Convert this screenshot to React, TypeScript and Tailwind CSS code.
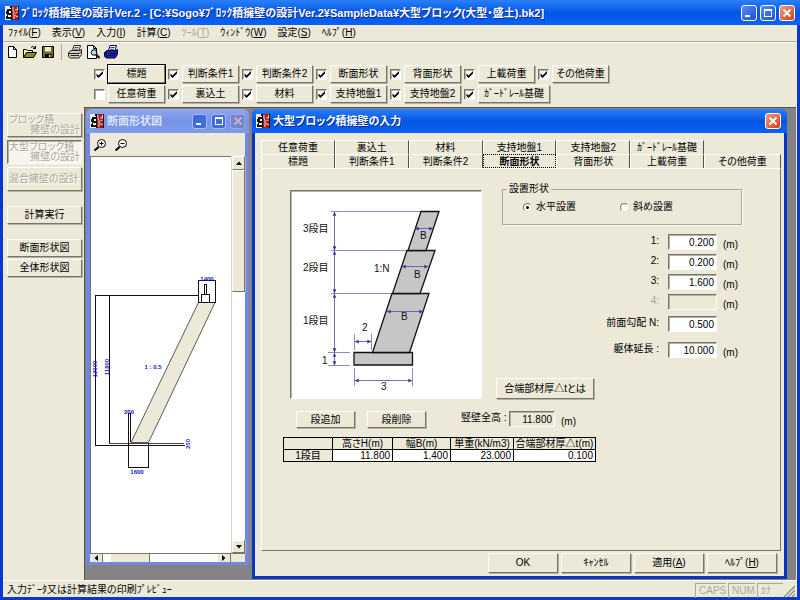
import { useState } from 'react';
import type { ReactNode } from 'react';
import clsx from 'clsx';

const TOP_CHECKS = [
  { label: '標題', on: true },
  { label: '判断条件1', on: true },
  { label: '判断条件2', on: true },
  { label: '断面形状', on: true },
  { label: '背面形状', on: true },
  { label: '上載荷重', on: true },
  { label: 'その他荷重', on: true },
];

const BOTTOM_CHECKS = [
  { label: '任意荷重', on: false },
  { label: '裏込土', on: true },
  { label: '材料', on: true },
  { label: '支持地盤1', on: true },
  { label: '支持地盤2', on: true },
  { label: 'ｶﾞｰﾄﾞﾚｰﾙ基礎', on: true },
];

const MENUS = [
  { label: 'ﾌｧｲﾙ', hot: 'F' },
  { label: '表示', hot: 'V' },
  { label: '入力', hot: 'I' },
  { label: '計算', hot: 'C' },
  { label: 'ﾂｰﾙ', hot: 'T', disabled: true },
  { label: 'ｳｨﾝﾄﾞｳ', hot: 'W' },
  { label: '設定', hot: 'S' },
  { label: 'ﾍﾙﾌﾟ', hot: 'H' },
];

const BACK_TABS = ['任意荷重', '裏込土', '材料', '支持地盤1', '支持地盤2', 'ｶﾞｰﾄﾞﾚｰﾙ基礎'];
const FRONT_TABS = ['標題', '判断条件1', '判断条件2', '断面形状', '背面形状', '上載荷重', 'その他荷重'];

const RAISED = 'border border-t-white border-l-white border-r-[#77756a] border-b-[#77756a] shadow-[1px_1px_0_#b5b2a2] bg-[#ece9d8]';
const SUNKEN = 'border border-t-[#77756a] border-l-[#77756a] border-r-white border-b-white shadow-[inset_1px_1px_0_#b5b2a2]';

function AppIcon() {
  return (
    <svg viewBox="0 0 14 14" className="w-3.5 h-3.5 shrink-0">
      <rect width="7" height="14" fill="#f4f0ea" />
      <rect x="7" width="7" height="14" fill="#a81c18" />
      <path d="M2 3h4v2H4v2h2v2H3v2h3v2H1v-3h1V8H1V5h1zM5 0h2v14H6V2H5z" fill="#111" />
      <path d="M8 1v4l1 1v7M10 4h2.500M10.500 7l2-1M10 9.500l3 1.500M12.500 1v3" fill="none" stroke="#f6e6dc" />
      <path d="M13 0h1v14h-1z" fill="#301010" />
    </svg>
  );
}

function CaptionButton({ kind, inactive }: { kind: 'min' | 'max' | 'close'; inactive?: boolean }) {
  const names = { min: '最小化', max: '最大化', close: '閉じる' };
  const size = inactive ? 'w-[15px] h-[15px]' : 'w-4 h-4';
  return (
    <button
      aria-label={names[kind]}
      className={clsx(
        'rounded-[3px] border flex items-center justify-center',
        size,
        kind === 'close' && !inactive && 'border-white bg-linear-to-br from-[#f09a80] to-[#cf3a12]',
        kind === 'close' && inactive && 'border-[#98a6e4] bg-[#7b82c8]',
        kind !== 'close' && !inactive && 'border-white bg-linear-to-br from-[#5a8cf4] to-[#1c4fd8]',
        kind !== 'close' && inactive && 'border-[#a9bdf4] bg-[#3f6be0]',
      )}
    >
      <svg viewBox="0 0 12 12" className="w-3 h-3" fill="none" stroke={kind === 'close' && inactive ? '#b9b2d8' : '#fff'}>
        {kind === 'min' && <path d="M2 9h5" strokeWidth="2" />}
        {kind === 'max' && <path d="M2 2.500h8M2.500 2v8M9.500 2v8M2 9.500h8M2 3.500h8" />}
        {kind === 'close' && <path d="M2.500 2.500l7 7M9.500 2.500l-7 7" strokeWidth="1.800" />}
      </svg>
    </button>
  );
}

function PushButton({ children, className }: { children: ReactNode; className?: string }) {
  return (
    <button className={clsx(RAISED, 'flex items-center justify-center whitespace-nowrap', className)}>
      {children}
    </button>
  );
}

function CheckItem({ label, on, wide, focused }: { label: string; on: boolean; wide?: boolean; focused?: boolean }) {
  const [checked, setChecked] = useState(on);
  return (
    <div className="flex items-center gap-[3px] w-[74px]">
      <span className="relative w-[11px] h-[11px] shrink-0">
        <input
          type="checkbox"
          aria-label={label}
          checked={checked}
          onChange={() => setChecked(!checked)}
          className={clsx('peer block appearance-none w-[11px] h-[11px] bg-white', SUNKEN)}
        />
        <svg viewBox="0 0 11 11" className="absolute inset-0 hidden peer-checked:block pointer-events-none">
          <path d="M2.500 4.500v2.500L4.500 9l4.500-4.500V2L4.500 6.500z" fill="#000" />
        </svg>
      </span>
      <PushButton
        className={clsx('h-[18px] shrink-0', wide ? 'w-[72px]' : 'w-[57px]', focused && 'outline outline-black')}
      >
        {label}
      </PushButton>
    </div>
  );
}

function ToolButton({ name, children }: { name: string; children: ReactNode }) {
  return (
    <button aria-label={name} className="w-[18px] h-4 flex items-center justify-center">
      <svg viewBox="0 0 14 14" className="w-3.5 h-3.5">{children}</svg>
    </button>
  );
}

function Printer({ body, light }: { body: string; light: string }) {
  return (
    <>
      <path d="M4.500 5.500L6 .500h6.500l-1.500 5z" fill="#fff" stroke={body} />
      <path d="M6.500 2.500h4M6 4.200h4" stroke={body} strokeWidth="0.800" />
      <path d="M.500 7.500l2.500-2h8.500l2-1v5l-2.500 3.500H2.500l-2-1.500z" fill={light} stroke={body} />
      <path d="M1 8.500h10l2-2M2.500 10.500h8.500" fill="none" stroke={body} />
    </>
  );
}

function Toolbar() {
  return (
    <div className="flex items-center h-5">
      <ToolButton name="新規">
        <path d="M3.500 1.500h5l3 3v8h-8z" fill="#fff" stroke="#000" />
        <path d="M8.500 1.500v3h3" fill="none" stroke="#000" />
      </ToolButton>
      <ToolButton name="開く">
        <path d="M.500 12.500v-8h3l1 1h5v2" fill="#f8f4a0" stroke="#000" />
        <path d="M.500 12.500l3-5h10l-3 5z" fill="#8c8a20" stroke="#000" />
        <path d="M8 2.500c1.500-1.500 3-1 4 .500M12.500 1v2.500H10" fill="none" stroke="#000" />
      </ToolButton>
      <ToolButton name="保存">
        <path d="M1.500 1.500h11v11h-11z" fill="#6f6d18" stroke="#000" />
        <path d="M4 2h6v4.500H4z" fill="#ece9d8" />
        <path d="M4 9h6.500v3.500H4z" fill="#000" />
        <path d="M8 10h1.500v2H8z" fill="#fff" />
      </ToolButton>
      <span className="w-px h-4 bg-[#aca899] mx-1" />
      <ToolButton name="印刷"><Printer body="#222" light="#d4d0c8" /></ToolButton>
      <ToolButton name="印刷プレビュー">
        <path d="M1.500 .500h6l3 3v10h-9z" fill="#fff" stroke="#000" />
        <path d="M7.500 .500v3h3" fill="none" stroke="#000" />
        <circle cx="8" cy="7.500" r="2.800" fill="#b8dfe0" stroke="#000" />
        <path d="M10 9.500l3.500 3.500" stroke="#000" strokeWidth="2" />
      </ToolButton>
      <ToolButton name="一括印刷"><Printer body="#00005c" light="#1a2496" /></ToolButton>
    </div>
  );
}

function ModeButton({ lines, pressed }: { lines: string[]; pressed?: boolean }) {
  return (
    <button
      disabled
      className={clsx(
        'w-full h-6 px-px flex flex-col justify-center leading-[10px] text-[#aca899] whitespace-nowrap [text-shadow:1px_1px_0_#fff]',
        pressed ? clsx(SUNKEN, 'bg-[#f6f4ec]') : RAISED,
      )}
    >
      {lines.map((line, i) => (
        <span key={line} className={i === 0 ? 'self-start' : 'self-end'}>{line}</span>
      ))}
    </button>
  );
}

function Sidebar() {
  return (
    <nav className="w-[81px] shrink-0 pl-1 pr-0.5 pt-1.5 flex flex-col">
      <div className="flex flex-col gap-[3px]">
        <ModeButton lines={['ブロック積', '擁壁の設計']} />
        <ModeButton lines={['大型ブロック積', '擁壁の設計']} pressed />
        <ModeButton lines={['混合擁壁の設計']} />
      </div>
      <PushButton className="mt-[15px] h-[18px]">計算実行</PushButton>
      <PushButton className="mt-[15px] h-[18px]">断面形状図</PushButton>
      <PushButton className="mt-0.5 h-[18px]">全体形状図</PushButton>
    </nav>
  );
}

function SectionDrawing() {
  return (
    <svg viewBox="91 158 140 396" preserveAspectRatio="xMidYMin meet" className="w-[140px] h-[396px]" role="img" aria-label="断面形状図">
      <path d="M131 443.500h17.500L215 303.500h-16.500z" fill="#ece9d8" stroke="#333" strokeWidth="0.800" />
      <g fill="none" stroke="#111" shapeRendering="crispEdges">
        <path d="M198.500 281.500h17v22h-17z" />
        <path d="M201.500 303v-7.500h8v7.500M204.500 296v-11h2v11" />
        <path d="M198 296.500H96M95.500 296v150.500h89M109.500 296v148" />
        <path d="M109 444.500h75" stroke="#444" />
        <path d="M128.500 414v54.500h20v-25" />
        <path d="M130.500 414v29M128 414.500h3" />
      </g>
      <g fill="#1414c8" fontSize="6" fontWeight="bold" textAnchor="middle">
        <text x="207" y="282">1400</text>
        <text x="129" y="415">200</text>
        <text x="137" y="475">1600</text>
        <text x="153" y="370">1 : 0.5</text>
        <text transform="translate(97 370) rotate(-90)">12000</text>
        <text transform="translate(109 368) rotate(-90)">11800</text>
        <text transform="translate(190 445) rotate(-90)">200</text>
      </g>
    </svg>
  );
}

function Arrow({ d }: { d: string }) {
  return (
    <svg viewBox="0 0 8 8" className="w-2 h-2"><path d={d} fill="#000" /></svg>
  );
}

function SectionWindow() {
  return (
    <section className="w-[163px] shrink-0 mb-[14px] flex flex-col rounded-t-md bg-[#7288e0] px-1 pb-[3px]">
      <header className="h-6 shrink-0 -mx-1 px-1 rounded-t-md flex items-center bg-linear-to-b from-[#90a8ec] via-[#7593e6] to-[#7f9cea]">
        <AppIcon />
        <h2 className="ml-[3px] flex-1 text-[11px] text-[#dce5fb] font-bold">断面形状図</h2>
        <div className="flex gap-1">
          <CaptionButton kind="min" inactive />
          <CaptionButton kind="max" inactive />
          <CaptionButton kind="close" inactive />
        </div>
      </header>
      <div className="h-[23px] shrink-0 bg-[#ece9d8] flex items-center gap-[7px] px-[3px]">
        {['M3.500 4.500h4M5.500 2.500v4', 'M3.500 4.500h4'].map((sign, i) => (
          <button key={sign} aria-label={i === 0 ? '拡大' : '縮小'}>
            <svg viewBox="-3 0 14 12" className="w-3.5 h-3">
              <path d="M2.500 8L-1.500 11.500" stroke="#000" strokeWidth="2" />
              <circle cx="5.500" cy="4.500" r="4" fill="#fff" stroke="#000" />
              <path d={sign} stroke="#000" />
            </svg>
          </button>
        ))}
      </div>
      <div className="flex-1 flex bg-white">
        <div className="flex-1 border-t border-l border-[#77756a] overflow-hidden">
          <SectionDrawing />
        </div>
        <div className="w-[14px] flex flex-col border-l border-[#d8d5c6]">
          <button aria-label="上へ" className={clsx(RAISED, 'h-[14px] flex items-center justify-center')}><Arrow d="M1 6h6L4 2.500z" /></button>
          <div className={clsx(RAISED, 'h-[122px]')} />
          <div className="flex-1 bg-white" />
          <button aria-label="下へ" className={clsx(RAISED, 'h-[13px] flex items-center justify-center')}><Arrow d="M1 2h6L4 5.500z" /></button>
        </div>
      </div>
      <div className="h-[9px] shrink-0 flex bg-white border-t border-[#77756a]">
        <button aria-label="左へ" className="w-[13px] bg-[#ece9d8] flex items-center justify-center border-r border-[#77756a]"><Arrow d="M6 1v6L2.500 4z" /></button>
        <div className="ml-2 w-[39px] bg-[#ece9d8] border-r border-[#77756a]" />
        <div className="flex-1" />
        <button aria-label="右へ" className="w-[13px] bg-[#ece9d8] flex items-center justify-center border-r border-[#77756a]"><Arrow d="M2 1v6l3.500-3z" /></button>
        <div className="w-[14px] bg-[#ece9d8]" />
      </div>
    </section>
  );
}

function ShapeFigure() {
  return (
    <svg viewBox="291 191 190 207" className="block w-full" role="img" aria-label="寸法図">
      <defs>
        <marker id="tip" viewBox="0 0 6 6" refX="5" refY="3" markerWidth="5" markerHeight="5" orient="auto-start-reverse">
          <path d="M0 .500L5.500 3 0 5.500z" fill="#3c3c90" />
        </marker>
      </defs>
      <g stroke="#8a8ac4" shapeRendering="crispEdges">
        <path d="M331 211.500h90M331 250.500h77M331 293.500h60M328 352.500h22M328 365.500h22" />
        <path d="M354.500 334v16M371.500 334v16M354.500 368v18M412.500 368v18" />
      </g>
      <g fill="#c6c6c6" stroke="#111" strokeWidth="1.300">
        <path d="M354 352.500h58.500v12.500H354z" />
        <path d="M372.500 352.500h37L429 293.500h-37z" />
        <path d="M392.500 293.500h27.500L435 250.500h-28z" />
        <path d="M408 250.500h18L439 211.500h-18z" />
      </g>
      <g stroke="#6060a8" strokeWidth="0.900" markerStart="url(#tip)" markerEnd="url(#tip)">
        <path d="M334.500 212v38" />
        <path d="M334.500 251v42" />
        <path d="M334.500 294v58" />
        <path d="M334.500 353v12" />
        <path d="M355 341.500h16" />
        <path d="M355 380.500h57" />
        <path d="M387 311.500h36" />
        <path d="M402 266.500h26" />
        <path d="M415 228.500h18" />
      </g>
      <g fontSize="10" fill="#111">
        <text x="303" y="232">3段目</text>
        <text x="303" y="271">2段目</text>
        <text x="303" y="324">1段目</text>
        <text x="374" y="272">1:N</text>
        <text x="420" y="239">B</text>
        <text x="414" y="278">B</text>
        <text x="401" y="320">B</text>
        <text x="362" y="331">2</text>
        <text x="322" y="364">1</text>
        <text x="381" y="390">3</text>
      </g>
    </svg>
  );
}

function Field({ id, label, value, unit, disabled }: { id: string; label: string; value: string; unit?: boolean; disabled?: boolean }) {
  return (
    <div className="flex justify-end h-4">
      <label htmlFor={id} className={clsx('mr-[9px]', disabled && 'text-[#aca899]')}>{label}</label>
      <input
        id={id}
        defaultValue={value}
        disabled={disabled}
        className={clsx('w-[49px] h-4 px-0.5 text-right', SUNKEN, disabled ? 'bg-[#ece9d8]' : 'bg-white')}
      />
      <span className="w-[25px] pl-1.5 pt-1">{unit && '(m)'}</span>
    </div>
  );
}

function Radio({ label, checked }: { label: string; checked?: boolean }) {
  return (
    <label className="flex items-center gap-1 w-[97px]">
      <input
        type="radio"
        name="placement"
        defaultChecked={checked}
        className={clsx(
          'appearance-none w-[9px] h-[9px] rounded-full bg-white flex items-center justify-center',
          'border border-t-[#77756a] border-l-[#77756a] border-r-[#e4e1d2] border-b-[#e4e1d2]',
          "checked:before:content-[''] checked:before:w-[3px] checked:before:h-[3px] checked:before:rounded-full checked:before:bg-black",
        )}
      />
      {label}
    </label>
  );
}

function BlockTable() {
  const th = 'border border-black font-normal h-3 leading-[11px] whitespace-nowrap';
  const td = 'border border-black bg-white h-3 leading-[11px] text-right pr-0.5';
  return (
    <table className="mt-2.5 w-[313px] table-fixed border-collapse">
      <colgroup>
        <col className="w-[49px]" />
        <col className="w-[60px]" />
        <col className="w-[58px]" />
        <col className="w-[63px]" />
        <col className="w-[82px]" />
      </colgroup>
      <thead>
        <tr>
          <th className={th} aria-label="段" />
          <th className={th}>高さH(m)</th>
          <th className={th}>幅B(m)</th>
          <th className={th}>単重(kN/m3)</th>
          <th className={th}>合端部材厚△t(m)</th>
        </tr>
      </thead>
      <tbody>
        <tr>
          <th scope="row" className={th}>1段目</th>
          <td className={td}>11.800</td>
          <td className={td}>1.400</td>
          <td className={td}>23.000</td>
          <td className={td}>0.100</td>
        </tr>
      </tbody>
    </table>
  );
}

function ShapePanel() {
  return (
    <div className="flex-1 border border-t-white border-l-white border-r-[#77756a] border-b-[#77756a] pt-[15px] pl-[21px] pr-[38px]">
      <div className="flex">
        <div className={clsx('mt-1.5 ml-[7px] w-48 shrink-0 self-start bg-white', SUNKEN)}>
          <ShapeFigure />
        </div>
        <div className="flex-1 ml-[14px] flex flex-col">
          <fieldset className="ml-1.5 h-[41px] border border-[#aca899] shadow-[1px_1px_0_#fff]">
            <legend className="ml-1 px-0.5 leading-[10px]">設置形状</legend>
            <div className="flex pl-5 pt-1.5">
              <Radio label="水平設置" checked />
              <Radio label="斜め設置" />
            </div>
          </fieldset>
          <div className="mt-[9px] flex flex-col gap-1">
            <Field id="d1" label="1:" value="0.200" unit />
            <Field id="d2" label="2:" value="0.200" unit />
            <Field id="d3" label="3:" value="1.600" unit />
            <Field id="d4" label="4:" value="" unit disabled />
          </div>
          <div className="mt-1.5 flex flex-col gap-2.5">
            <Field id="slope" label="前面勾配 N:" value="0.500" />
            <Field id="length" label="躯体延長 :" value="10.000" unit />
          </div>
          <PushButton className="mt-5 w-[98px] h-[21px]">合端部材厚△tとは</PushButton>
        </div>
      </div>
      <div className="mt-3 ml-[13px] h-4 flex items-start">
        <PushButton className="w-[59px] h-[17px]">段追加</PushButton>
        <PushButton className="ml-3 w-[59px] h-[17px]">段削除</PushButton>
        <label htmlFor="total" className="ml-[35px] w-12">竪壁全高 :</label>
        <input id="total" readOnly value="11.800" className={clsx('w-[46px] h-4 px-0.5 text-right bg-[#ece9d8]', SUNKEN)} />
        <span className="pl-1.5 pt-1">(m)</span>
      </div>
      <BlockTable />
    </div>
  );
}

function InputDialog() {
  const [active, setActive] = useState('断面形状');
  return (
    <section className="flex-1 flex flex-col rounded-t-md bg-[#0a35c4] px-[3px] pb-[3px]">
      <header className="h-6 shrink-0 -mx-[3px] px-1 pr-1.5 rounded-t-md flex items-center bg-linear-to-b from-[#2a80f8] via-[#0455e4] to-[#0a62f6]">
        <AppIcon />
        <h2 className="ml-[3px] flex-1 text-[11px] font-bold text-white [text-shadow:1px_1px_0_#0a2a8c]">大型ブロック積擁壁の入力</h2>
        <CaptionButton kind="close" />
      </header>
      <div className="flex-1 flex flex-col bg-[#ece9d8] pt-[7px] pl-1.5 pr-[3px] pb-[3px]">
        <div role="tablist" className="grid grid-cols-[repeat(6,1fr)_77px]">
          {BACK_TABS.map((tab) => (
            <button key={tab} role="tab" className="h-[14px] leading-[14px] border-t border-l border-white border-r border-r-[#55534a]">
              {tab}
            </button>
          ))}
          <span />
          {FRONT_TABS.map((tab) => (
            <button
              key={tab}
              role="tab"
              aria-selected={tab === active}
              onClick={() => setActive(tab)}
              className={clsx(
                'h-[14px] leading-[13px]',
                tab === active
                  ? 'font-bold border border-dotted border-black'
                  : 'border-t border-l border-white border-r border-r-[#55534a]',
              )}
            >
              {tab}
            </button>
          ))}
        </div>
        <ShapePanel />
        <footer className="flex justify-end gap-[3px] pt-0.5 pr-1">
          <PushButton className="w-[70px] h-5">OK</PushButton>
          <PushButton className="w-[70px] h-5">ｷｬﾝｾﾙ</PushButton>
          <PushButton className="w-[70px] h-5">適用(<u>A</u>)</PushButton>
          <PushButton className="w-[70px] h-5">ﾍﾙﾌﾟ(<u>H</u>)</PushButton>
        </footer>
      </div>
    </section>
  );
}

export default function App() {
  return (
    <div className="min-h-screen flex flex-col bg-[#0837cf] px-[3px] pb-[3px] text-[10px] leading-[14px] text-black font-['Liberation_Sans','Noto_Sans_CJK_JP',sans-serif] [font-feature-settings:'palt']">
      <header className="h-[25px] shrink-0 -mx-[3px] px-[5px] flex items-center bg-linear-to-b from-[#2a80f8] via-[#0455e4] to-[#0a62f6]">
        <AppIcon />
        <h1 className="ml-0.5 flex-1 whitespace-nowrap text-[11px] font-bold text-white [text-shadow:1px_1px_0_#0a2a8c]">
          ﾌﾞﾛｯｸ積擁壁の設計Ver.2 - [C:¥Sogo¥ﾌﾞﾛｯｸ積擁壁の設計Ver.2¥SampleData¥大型ブロック(大型・盛土).bk2]
        </h1>
        <div className="flex gap-[3px]">
          <CaptionButton kind="min" />
          <CaptionButton kind="max" />
          <CaptionButton kind="close" />
        </div>
      </header>
      <div className="flex-1 flex flex-col bg-[#ece9d8]">
        <nav className="h-[17px] flex items-center gap-[11px] pl-[5px] border-b border-[#aca899] shadow-[0_1px_0_#fff]">
          {MENUS.map((m) => (
            <button key={m.hot} disabled={m.disabled} className="disabled:text-[#aca899]">
              {m.label}(<u>{m.hot}</u>)
            </button>
          ))}
        </nav>
        <Toolbar />
        <div className="h-[45px] pt-[3px] pl-[91px] flex flex-col gap-0.5">
          <div className="flex">
            {TOP_CHECKS.map((c, i) => <CheckItem key={c.label} {...c} focused={i === 0} />)}
          </div>
          <div className="flex">
            {BOTTOM_CHECKS.map((c, i) => <CheckItem key={c.label} {...c} wide={i === 5} />)}
          </div>
        </div>
        <div className="flex-1 flex">
          <Sidebar />
          <main className="flex-1 mr-px flex gap-[3px] bg-[#848284] border-t border-l border-[#55534a] pt-px pl-px pr-[9px] pb-px">
            <SectionWindow />
            <InputDialog />
          </main>
        </div>
        <footer className="h-[17px] flex items-center border-t border-white pt-0.5 pl-1 pr-0.5">
          <span className="flex-1">入力ﾃﾞｰﾀ又は計算結果の印刷ﾌﾟﾚﾋﾞｭｰ</span>
          <div className="flex gap-0.5 text-[#aca899]">
            <span className="w-[31px] pl-[3px] border-l border-t border-[#aca899]">CAPS</span>
            <span className="w-[27px] pl-[3px] border-l border-t border-[#aca899]">NUM</span>
            <span className="w-[26px] pl-[3px] border-l border-t border-[#aca899]">ｶﾅ</span>
          </div>
          <svg viewBox="0 0 12 12" className="w-3 h-3 self-end">
            <path d="M1 12L12 1M5 12l7-7M9 12l3-3" stroke="#8d8a7c" strokeWidth="1.300" />
          </svg>
        </footer>
      </div>
    </div>
  );
}
